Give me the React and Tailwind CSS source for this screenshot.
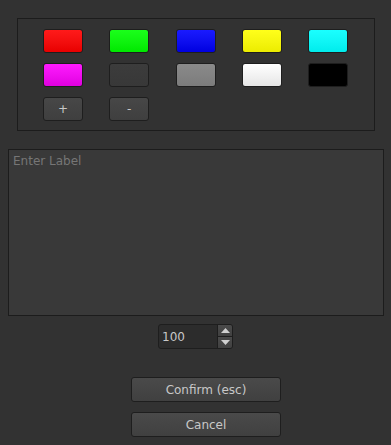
import { useState } from 'react';

const swatches = [
  'bg-gradient-to-b from-[#ff1a1a] to-[#e80000]',
  'bg-gradient-to-b from-[#1aff1a] to-[#00e800]',
  'bg-gradient-to-b from-[#1a1aff] to-[#0000e0]',
  'bg-gradient-to-b from-[#ffff1a] to-[#ecec00]',
  'bg-gradient-to-b from-[#1affff] to-[#00ecec]',
  'bg-gradient-to-b from-[#ff1aff] to-[#e000e0]',
  'bg-gradient-to-b from-[#3c3c3c] to-[#383838]',
  'bg-gradient-to-b from-[#8a8a8a] to-[#7c7c7c]',
  'bg-gradient-to-b from-[#ffffff] to-[#e6e6e6]',
  'bg-[#000000]',
];

export default function App() {
  const [label, setLabel] = useState('');
  const [size, setSize] = useState(100);

  return (
    <div className="w-[391px] h-[445px] bg-[#323232] overflow-hidden font-['DejaVu_Sans',sans-serif] text-[11px] text-[#c8c8c8]">
      {/* Colour palette */}
      <div className="ml-[17px] mt-[18px] w-[358px] h-[113px] border border-[#1c1c1c] pt-[10px] pl-[25px]">
        <div className="grid grid-cols-[repeat(5,40px)] gap-x-[26.25px] gap-y-[10px]">
          {swatches.map((cls, i) => (
            <div key={i} className={`h-[24px] rounded-[3px] border border-[#1e1e1e] ${cls}`} />
          ))}
          <button className="h-[24px] rounded-[3px] border border-[#1e1e1e] bg-gradient-to-b from-[#474747] to-[#3f3f3f] text-[#c8c8c8] text-[12px] leading-none">
            +
          </button>
          <button className="h-[24px] rounded-[3px] border border-[#1e1e1e] bg-gradient-to-b from-[#474747] to-[#3f3f3f] text-[#c8c8c8] text-[12px] leading-none">
            -
          </button>
        </div>
      </div>

      {/* Label input */}
      <textarea
        autoFocus
        value={label}
        onChange={e => setLabel(e.target.value)}
        placeholder="Enter Label"
        className="block ml-[8px] mt-[18px] w-[376px] h-[167px] resize-none bg-[#393939] border border-[#1c1c1c] px-[4px] py-[4px] text-[12px] leading-[15px] text-[#c8c8c8] placeholder:text-[#767676] outline-none caret-[#c8c8c8]"
      />

      {/* Size spinbox */}
      <div className="flex ml-[158px] mt-[8px] w-[75px] h-[25px] rounded-[3px] border border-[#1e1e1e] bg-[#2c2c2c] overflow-hidden">
        <input
          value={size}
          onChange={e => setSize(e.target.value)}
          className="flex-1 min-w-0 bg-transparent pl-[3px] text-[12px] text-[#c8c8c8] outline-none"
        />
        <div className="flex flex-col w-[15px] border-l border-[#1e1e1e]">
          <button onClick={() => setSize(Number(size) + 1)} className="flex-1 flex items-center justify-center bg-gradient-to-b from-[#4a4a4a] to-[#414141] border-b border-[#1e1e1e]">
            <svg width="9" height="5" viewBox="0 0 9 5"><path d="M0 5 L4.5 0 L9 5 Z" fill="#d0d0d0" /></svg>
          </button>
          <button onClick={() => setSize(Number(size) - 1)} className="flex-1 flex items-center justify-center bg-gradient-to-b from-[#4a4a4a] to-[#414141]">
            <svg width="9" height="5" viewBox="0 0 9 5"><path d="M0 0 L4.5 5 L9 0 Z" fill="#d0d0d0" /></svg>
          </button>
        </div>
      </div>

      {/* Actions */}
      <div className="flex flex-col gap-[10px] ml-[131px] mt-[28px] w-[150px]">
        <button className="h-[25px] rounded-[3px] border border-[#1e1e1e] bg-gradient-to-b from-[#4a4a4a] to-[#404040] text-[12px] text-[#c8c8c8]">
          Confirm (esc)
        </button>
        <button className="h-[25px] rounded-[3px] border border-[#1e1e1e] bg-gradient-to-b from-[#4a4a4a] to-[#404040] text-[12px] text-[#c8c8c8]">
          Cancel
        </button>
      </div>
    </div>
  );
}
